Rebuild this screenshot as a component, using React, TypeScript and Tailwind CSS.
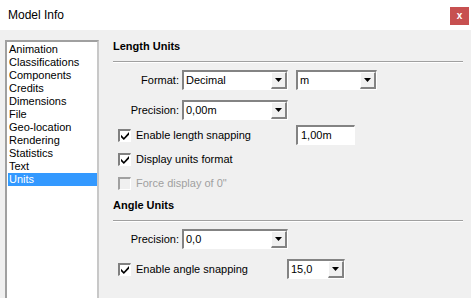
const items = [
  'Animation',
  'Classifications',
  'Components',
  'Credits',
  'Dimensions',
  'File',
  'Geo-location',
  'Rendering',
  'Statistics',
  'Text',
  'Units',
];

function Arrow() {
  return (
    <svg width="7" height="4" viewBox="0 0 7 4">
      <path d="M0 0h7L3.5 4z" fill="#000" />
    </svg>
  );
}

function Combo({ value, width }: { value: string; width: string }) {
  return (
    <div
      className={`${width} h-[20px] flex bg-white border-t-2 border-l-2 border-t-[#838383] border-l-[#838383] border-b border-r border-b-white border-r-white`}
    >
      <div className="flex-1 pl-[2px] flex items-center text-[11px] leading-none">{value}</div>
      <div className="w-[16px] h-full bg-[#f0f0f0] flex items-center justify-center border-t border-l border-t-white border-l-white border-b-2 border-r-2 border-b-[#838383] border-r-[#838383]">
        <Arrow />
      </div>
    </div>
  );
}

function Check({ checked, disabled, label }: { checked: boolean; disabled?: boolean; label: string }) {
  return (
    <div className="flex items-center gap-[5px]">
      <div
        className={`w-[13px] h-[13px] flex items-center justify-center border-t-2 border-l-2 border-b border-r border-b-white border-r-white ${
          disabled ? 'bg-[#f0f0f0] border-t-[#a0a0a0] border-l-[#a0a0a0]' : 'bg-white border-t-[#808080] border-l-[#808080]'
        }`}
      >
        {checked && (
          <svg width="8" height="8" viewBox="0 0 7 7">
            <path d="M0 2.5l2.5 2.5L7 0v2.5L2.5 7 0 4.5z" fill="#000" />
          </svg>
        )}
      </div>
      <span className={`text-[11px] ${disabled ? 'text-[#a0a0a0]' : 'text-black'}`}>{label}</span>
    </div>
  );
}

function Heading({ children }: { children: string }) {
  return (
    <div>
      <div className="text-[11px] font-bold leading-[13px] pl-[6px]">{children}</div>
      <div className="mt-[8px] ml-[6px] mr-[8px] h-[2px] border-t border-t-[#a0a0a0] border-b border-b-white" />
    </div>
  );
}

export default function App() {
  return (
    <div
      className="w-[471px] h-[298px] overflow-hidden bg-[#f0f0f0] flex flex-col text-black"
      style={{ fontFamily: '"Liberation Sans", Arial, sans-serif' }}
    >
      <div className="h-[30px] bg-white flex items-start justify-between">
        <div className="pl-[8px] pt-[8px] text-[12px] leading-[14px]">Model Info</div>
        <div className="mt-[7px] mr-[2px] w-[19px] h-[18px] bg-[#c75050] flex items-center justify-center text-white text-[10px] font-bold leading-none">
          x
        </div>
      </div>

      <div className="flex-1 flex">
        <div className="ml-[5px] mt-[10px] w-[94px] bg-white border-t-2 border-l-2 border-r-2 border-t-[#a0a0a0] border-l-[#a0a0a0] border-r-[#c8c8c8] pt-[1px] pl-[1px]">
          {items.map((it) => (
            <div
              key={it}
              className={`h-[13px] leading-[13px] text-[11px] pl-[1px] ${
                it === 'Units' ? 'bg-[#3399ff] text-white' : ''
              }`}
            >
              {it}
            </div>
          ))}
        </div>

        <div className="flex-1 pl-[8px] pt-[10px] flex flex-col">
          <Heading>Length Units</Heading>

          <div className="mt-[7px] flex items-center">
            <div className="w-[75px] text-right text-[11px] pr-[3px]">Format:</div>
            <Combo value="Decimal" width="w-[106px]" />
            <div className="w-[8px]" />
            <Combo value="m" width="w-[81px]" />
          </div>

          <div className="mt-[10px] flex items-center">
            <div className="w-[75px] text-right text-[11px] pr-[3px]">Precision:</div>
            <Combo value="0,00m" width="w-[106px]" />
          </div>

          <div className="mt-[5px] flex items-center pl-[11px]">
            <div className="w-[178px]">
              <Check checked label="Enable length snapping" />
            </div>
            <div className="w-[59px] h-[20px] bg-white border-t-2 border-l-2 border-t-[#838383] border-l-[#838383] border-b border-r border-b-white border-r-white pl-[3px] flex items-center text-[11px]">
              1,00m
            </div>
          </div>

          <div className="mt-[4px] pl-[11px] h-[20px] flex items-center">
            <Check checked label="Display units format" />
          </div>

          <div className="mt-[4px] pl-[11px] h-[20px] flex items-center">
            <Check checked={false} disabled label={'Force display of 0"'} />
          </div>

          <div className="mt-[6px]">
            <Heading>Angle Units</Heading>
          </div>

          <div className="mt-[7px] flex items-center">
            <div className="w-[75px] text-right text-[11px] pr-[3px]">Precision:</div>
            <Combo value="0,0" width="w-[106px]" />
          </div>

          <div className="mt-[10px] flex items-center pl-[11px]">
            <div className="w-[169px]">
              <Check checked label="Enable angle snapping" />
            </div>
            <Combo value="15,0" width="w-[58px]" />
          </div>
        </div>
      </div>
    </div>
  );
}
